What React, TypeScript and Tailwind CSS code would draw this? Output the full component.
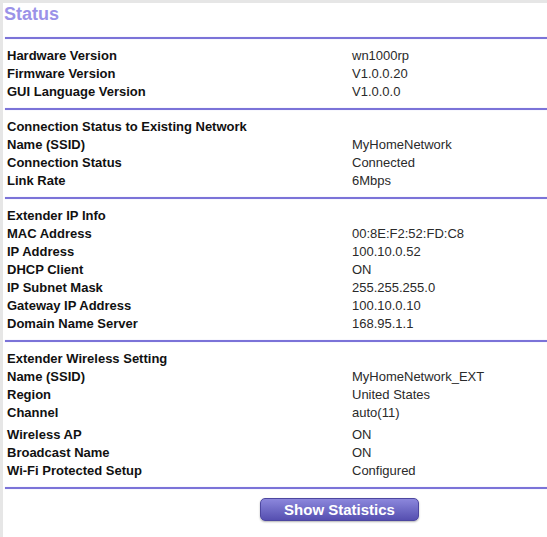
const sections: { rows: [string, string][]; extraGapAt?: number }[] = [
  {
    rows: [
      ["Hardware Version", "wn1000rp"],
      ["Firmware Version", "V1.0.0.20"],
      ["GUI Language Version", "V1.0.0.0"],
    ],
  },
  {
    rows: [
      ["Connection Status to Existing Network", ""],
      ["Name (SSID)", "MyHomeNetwork"],
      ["Connection Status", "Connected"],
      ["Link Rate", "6Mbps"],
    ],
  },
  {
    rows: [
      ["Extender IP Info", ""],
      ["MAC Address", "00:8E:F2:52:FD:C8"],
      ["IP Address", "100.10.0.52"],
      ["DHCP Client", "ON"],
      ["IP Subnet Mask", "255.255.255.0"],
      ["Gateway IP Address", "100.10.0.10"],
      ["Domain Name Server", "168.95.1.1"],
    ],
  },
  {
    extraGapAt: 4,
    rows: [
      ["Extender Wireless Setting", ""],
      ["Name (SSID)", "MyHomeNetwork_EXT"],
      ["Region", "United States"],
      ["Channel", "auto(11)"],
      ["Wireless AP", "ON"],
      ["Broadcast Name", "ON"],
      ["Wi-Fi Protected Setup", "Configured"],
    ],
  },
];

function Rule() {
  return <div className="h-[2px] bg-[#7b73d8] shadow-[0_0_1px_#b9b4ee]" />;
}

export default function App() {
  return (
    <div
      className="h-[537px] w-[547px] overflow-hidden bg-[#e6e6e6] pt-[3px] pl-[3px]"
      style={{ fontFamily: '"Liberation Sans", Arial, sans-serif' }}
    >
      <div className="h-full bg-white pl-[2px]">
        <div className="-ml-[1px] h-[34px] text-[18px] font-bold leading-[22px] text-[#9b92e8]">Status</div>
        {sections.map((s, i) => (
          <div key={i}>
            <Rule />
            <div className="pb-[7px] pt-[8px]">
              {s.rows.map(([label, value], j) => (
                <div
                  key={j}
                  className={`flex h-[18px] items-center text-[13px] leading-[18px] ${
                    s.extraGapAt === j ? "mt-[4px]" : ""
                  }`}
                >
                  <div className="w-[347px] shrink-0 pl-[2px] font-bold text-[#111]">{label}</div>
                  <div className="text-[#2a2a2a]">{value}</div>
                </div>
              ))}
            </div>
          </div>
        ))}
        <Rule />
        <div className="flex pl-[255px] pt-[9px]">
          <button
            type="button"
            className="h-[23px] w-[159px] rounded-[5px] border border-[#4d47a0] bg-gradient-to-b from-[#8c87dc] to-[#564fb0] text-[15px] font-bold leading-[20px] text-white shadow-[0_1px_2px_rgba(0,0,0,0.3)]"
          >
            Show Statistics
          </button>
        </div>
      </div>
    </div>
  );
}
